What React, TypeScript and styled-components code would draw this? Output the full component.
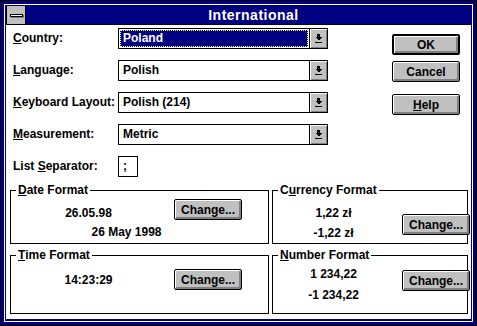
import React from "react";
import styled, { createGlobalStyle } from "styled-components";

const GlobalStyle = createGlobalStyle`
  html, body {
    margin: 0;
    padding: 0;
    background: #fff;
  }
  body {
    font-family: "Liberation Sans", Arial, sans-serif;
    font-weight: bold;
    font-size: 12px;
    color: #000;
  }
`;

const Frame = styled.div`
  width: 477px;
  height: 326px;
  box-sizing: border-box;
  border: 1px solid #000;
  background: #000080;
  padding: 3px;
`;

const FrameInner = styled.div`
  height: 100%;
  box-sizing: border-box;
  border: 1px solid #fff;
  padding: 1px 1px 2px 1px;
  display: flex;
  flex-direction: column;
`;

const TitleBar = styled.div`
  height: 18px;
  display: flex;
  align-items: stretch;
  background: #000080;
  border-bottom: 1px solid #000;
`;

const SysMenu = styled.div`
  width: 18px;
  background: #c0c0c0;
  border-left: 1px solid #000;
  border-right: 1px solid #000;
  display: flex;
  align-items: center;
  justify-content: center;
`;

const SysBar = styled.div`
  width: 11px;
  height: 1px;
  background: #fff;
  border: 1px solid #000;
  box-shadow: 1px 1px 0 #808080;
`;

const Title = styled.div`
  flex: 1;
  color: #fff;
  font-size: 14px;
  letter-spacing: 0.5px;
  line-height: 18px;
  text-align: center;
  padding-left: 10px;
`;

const Client = styled.div`
  flex: 1;
  background: #fff;
  padding: 3px 0 0 4px;
  display: flex;
  flex-direction: column;
`;

const TopSection = styled.div`
  display: flex;
  align-items: flex-start;
  padding-left: 3px;
`;

const Form = styled.div`
  display: grid;
  grid-template-columns: 105px 210px;
  grid-auto-rows: 21px;
  row-gap: 11px;
`;

const Label = styled.div`
  line-height: 21px;
  white-space: nowrap;
`;

const ComboBox = styled.div`
  display: flex;
  box-sizing: border-box;
  height: 21px;
  border: 1px solid #000;
  background: #fff;
`;

const ComboField = styled.div<{ $focused?: boolean }>`
  flex: 1;
  margin: 1px;
  padding-left: 2px;
  box-sizing: border-box;
  line-height: 15px;
  border: 1px ${(p) => (p.$focused ? "dotted #ffff80" : "solid transparent")};
  background: ${(p) => (p.$focused ? "#000080" : "#fff")};
  color: ${(p) => (p.$focused ? "#fff" : "#000")};
`;

const ArrowButton = styled.div`
  width: 17px;
  border-left: 1px solid #000;
  background: #c0c0c0;
  box-shadow: inset 1px 1px 0 #fff, inset -1px -1px 0 #808080;
  display: flex;
  align-items: center;
  justify-content: center;
`;

const SmallField = styled.div`
  width: 20px;
  height: 21px;
  box-sizing: border-box;
  border: 1px solid #000;
  padding-left: 4px;
  line-height: 19px;
`;

const ButtonColumn = styled.div`
  display: flex;
  flex-direction: column;
  margin-left: 64px;
  padding-top: 6px;
`;

const Button = styled.button<{ $default?: boolean; $gap?: number }>`
  width: 68px;
  height: 21px;
  box-sizing: border-box;
  margin: ${(p) => p.$gap ?? 0}px 0 0 0;
  padding: 0;
  background: #c0c0c0;
  border: ${(p) => (p.$default ? 2 : 1)}px solid #000;
  border-radius: 2px;
  box-shadow: inset 1px 1px 0 #fff, inset -1px -1px 0 #808080,
    inset -2px -2px 0 #808080;
  font-family: "Liberation Sans", Arial, sans-serif;
  font-weight: bold;
  font-size: 12px;
  color: #000;
`;

const BoxGrid = styled.div`
  display: grid;
  grid-template-columns: 259px 196px;
  grid-template-rows: 60px 65px;
  column-gap: 3px;
  row-gap: 5px;
  margin-top: 7px;
`;

const GroupBox = styled.fieldset`
  margin: 0;
  padding: 0;
  min-width: 0;
  box-sizing: border-box;
  border: 1px solid #000;
`;

const Legend = styled.legend`
  margin-left: 5px;
  padding: 0 2px;
  line-height: 12px;
`;

const SplitGrid = styled.div<{ $cols: string; $top: number }>`
  display: grid;
  grid-template-columns: ${(p) => p.$cols};
  column-gap: 8px;
  padding-top: ${(p) => p.$top}px;
  align-items: start;
`;

const Value = styled.div<{ $lh: number; $pt?: number; $wide?: boolean }>`
  text-align: center;
  line-height: ${(p) => p.$lh}px;
  padding-top: ${(p) => p.$pt ?? 0}px;
  grid-column: ${(p) => (p.$wide ? "1 / -1" : "auto")};
  white-space: nowrap;
`;

const Stack = styled.div`
  display: flex;
  flex-direction: column;
`;

const DropArrow = () => (
  <svg width="7" height="9" viewBox="0 0 7 9" shapeRendering="crispEdges">
    <rect x="2" y="0" width="3" height="3" fill="#000" />
    <polygon points="0,3 7,3 3.5,6.5" fill="#000" />
    <rect x="0" y="8" width="7" height="1" fill="#000" />
  </svg>
);

const Combo = ({ value, focused }: { value: string; focused?: boolean }) => (
  <ComboBox>
    <ComboField $focused={focused}>{value}</ComboField>
    <ArrowButton>
      <DropArrow />
    </ArrowButton>
  </ComboBox>
);

export default function App() {
  return (
    <>
      <GlobalStyle />
      <Frame>
        <FrameInner>
          <TitleBar>
            <SysMenu>
              <SysBar />
            </SysMenu>
            <Title>International</Title>
          </TitleBar>
          <Client>
            <TopSection>
              <Form>
                <Label>
                  <u>C</u>ountry:
                </Label>
                <Combo value="Poland" focused />
                <Label>
                  <u>L</u>anguage:
                </Label>
                <Combo value="Polish" />
                <Label>
                  <u>K</u>eyboard Layout:
                </Label>
                <Combo value="Polish (214)" />
                <Label>
                  <u>M</u>easurement:
                </Label>
                <Combo value="Metric" />
                <Label>
                  List <u>S</u>eparator:
                </Label>
                <SmallField>;</SmallField>
              </Form>
              <ButtonColumn>
                <Button $default>OK</Button>
                <Button $gap={6}>Cancel</Button>
                <Button $gap={12}>
                  <u>H</u>elp
                </Button>
              </ButtonColumn>
            </TopSection>
            <BoxGrid>
              <GroupBox>
                <Legend>
                  <u>D</u>ate Format
                </Legend>
                <SplitGrid $cols="155px 68px" $top={3}>
                  <Value $lh={22} $pt={3}>26.05.98</Value>
                  <Button>Change...</Button>
                  <Value $lh={16} $wide>
                    26 May 1998
                  </Value>
                </SplitGrid>
              </GroupBox>
              <GroupBox>
                <Legend>
                  C<u>u</u>rrency Format
                </Legend>
                <SplitGrid $cols="121px 68px" $top={7}>
                  <Stack>
                    <Value $lh={20}>1,22 zł</Value>
                    <Value $lh={20}>-1,22 zł</Value>
                  </Stack>
                  <Button $gap={11}>Change...</Button>
                </SplitGrid>
              </GroupBox>
              <GroupBox>
                <Legend>
                  <u>T</u>ime Format
                </Legend>
                <SplitGrid $cols="155px 68px" $top={8}>
                  <Value $lh={22}>14:23:29</Value>
                  <Button>Change...</Button>
                </SplitGrid>
              </GroupBox>
              <GroupBox>
                <Legend>
                  <u>N</u>umber Format
                </Legend>
                <SplitGrid $cols="121px 68px" $top={3}>
                  <Stack>
                    <Value $lh={21}>1 234,22</Value>
                    <Value $lh={21}>-1 234,22</Value>
                  </Stack>
                  <Button $gap={6}>Change...</Button>
                </SplitGrid>
              </GroupBox>
            </BoxGrid>
          </Client>
        </FrameInner>
      </Frame>
    </>
  );
}
